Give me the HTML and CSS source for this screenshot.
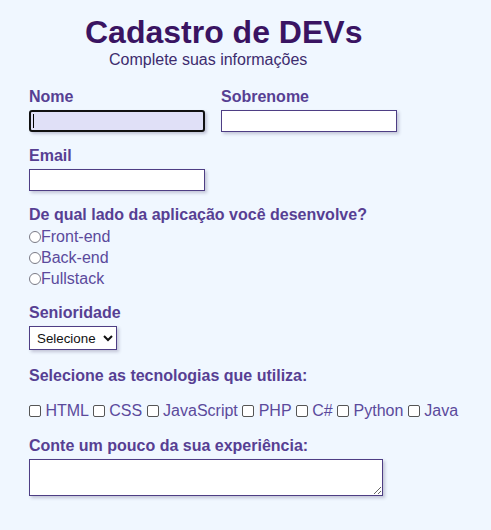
FILE: index.html
```html
<!DOCTYPE html>
<html lang="pt-BR">
<head>
<meta charset="utf-8">
<title>Cadastro de DEVs</title>
<link rel="stylesheet" href="styles.css">
</head>
<body>
<header class="page-header">
  <h1 class="title">Cadastro de DEVs</h1>
  <p class="subtitle">Complete suas informações</p>
</header>
<form class="form">
  <div class="row names">
    <div class="field">
      <label class="label" for="nome">Nome</label>
      <span class="input-wrap"><input class="input is-focused" id="nome" type="text"><span class="caret"></span></span>
    </div>
    <div class="field">
      <label class="label" for="sobrenome">Sobrenome</label>
      <input class="input" id="sobrenome" type="text">
    </div>
  </div>
  <div class="field">
    <label class="label" for="email">Email</label>
    <input class="input" id="email" type="email">
  </div>
  <div class="field">
    <span class="label">De qual lado da aplicação você desenvolve?</span>
    <div class="radios">
      <label class="opt"><input class="radio" type="radio" name="lado">Front-end</label>
      <label class="opt"><input class="radio" type="radio" name="lado">Back-end</label>
      <label class="opt"><input class="radio" type="radio" name="lado">Fullstack</label>
    </div>
  </div>
  <div class="field">
    <label class="label" for="sen">Senioridade</label>
    <div><select class="select" id="sen"><option>Selecione</option></select></div>
  </div>
  <div class="field techs-field">
    <span class="label">Selecione as tecnologias que utiliza:</span>
    <div class="techs"><input class="check" type="checkbox"> HTML <input class="check" type="checkbox"> CSS <input class="check" type="checkbox"> JavaScript <input class="check" type="checkbox"> PHP <input class="check" type="checkbox"> C# <input class="check" type="checkbox"> Python <input class="check" type="checkbox"> Java</div>
  </div>
  <div class="field">
    <label class="label" for="exp">Conte um pouco da sua experiência:</label>
    <textarea class="textarea" id="exp"></textarea>
  </div>
</form>
</body>
</html>
```

FILE: styles.css
```css
html, body {
  margin: 0;
  padding: 0;
  background: #f0f7ff;
}
body {
  font-family: "Liberation Sans", Arial, sans-serif;
  font-size: 16px;
  color: #5b4a9c;
  width: 491px;
  height: 530px;
  overflow: hidden;
}
.page-header {
  padding-top: 14px;
}
.title {
  margin: 0 0 0 85px;
  font-size: 32px;
  line-height: 37px;
  font-weight: bold;
  color: #3a1462;
}
.subtitle {
  margin: 0 0 0 109px;
  line-height: 18px;
  color: #3d2c6e;
}
.form {
  padding: 19px 0 0 29px;
  display: flex;
  flex-direction: column;
  gap: 15px;
}
.names {
  display: flex;
  gap: 16px;
}
.field {
  display: flex;
  flex-direction: column;
  align-items: flex-start;
}
.label {
  font-weight: bold;
  color: #573f93;
  line-height: 18px;
  margin-bottom: 4px;
}
.input-wrap {
  position: relative;
  display: inline-block;
}
.input {
  box-sizing: border-box;
  width: 176px;
  height: 22px;
  margin: 0;
  border: 1px solid #4e3e84;
  background: #fff;
  box-shadow: 2px 2px 3px rgba(60, 50, 100, 0.25);
  font: inherit;
  outline: none;
}
.input.is-focused {
  border: 2px solid #111;
  border-radius: 3px;
  background: #e0e0f7;
}
.caret {
  position: absolute;
  left: 4px;
  top: 4px;
  width: 1px;
  height: 14px;
  background: #000;
}
.radios {
  display: flex;
  flex-direction: column;
  margin-top: -2px;
}
.opt {
  display: flex;
  align-items: center;
  height: 21px;
  line-height: 21px;
}
.radio {
  margin: 0;
  width: 12px;
  height: 12px;
  appearance: none;
  border: 1px solid #7a7a86;
  border-radius: 50%;
  background: #fff;
}
.select {
  margin: 0;
  height: 24px;
  width: 88px;
  border: 1px solid #4e3e84;
  border-radius: 0;
  background: #fff;
  color: #111;
  font-family: "Liberation Sans", Arial, sans-serif;
  font-size: 13.33px;
  box-shadow: 2px 2px 3px rgba(60, 50, 100, 0.25);
  padding: 0 2px 0 3px;
}
.techs-field .label {
  margin-bottom: 17px;
}
.techs-field {
  margin-top: 2px;
}
.techs {
  line-height: 18px;
  white-space: nowrap;
  margin-bottom: 2px;
}
.check {
  margin: 0;
  width: 12px;
  height: 12px;
  appearance: none;
  border: 1px solid #555;
  border-radius: 2px;
  background: #fff;
  vertical-align: -1px;
}
.textarea {
  box-sizing: border-box;
  width: 354px;
  height: 37px;
  margin: 0;
  border: 1px solid #4e3e84;
  background: #fff;
  box-shadow: 2px 2px 3px rgba(60, 50, 100, 0.25);
  resize: both;
  font: inherit;
}
```
